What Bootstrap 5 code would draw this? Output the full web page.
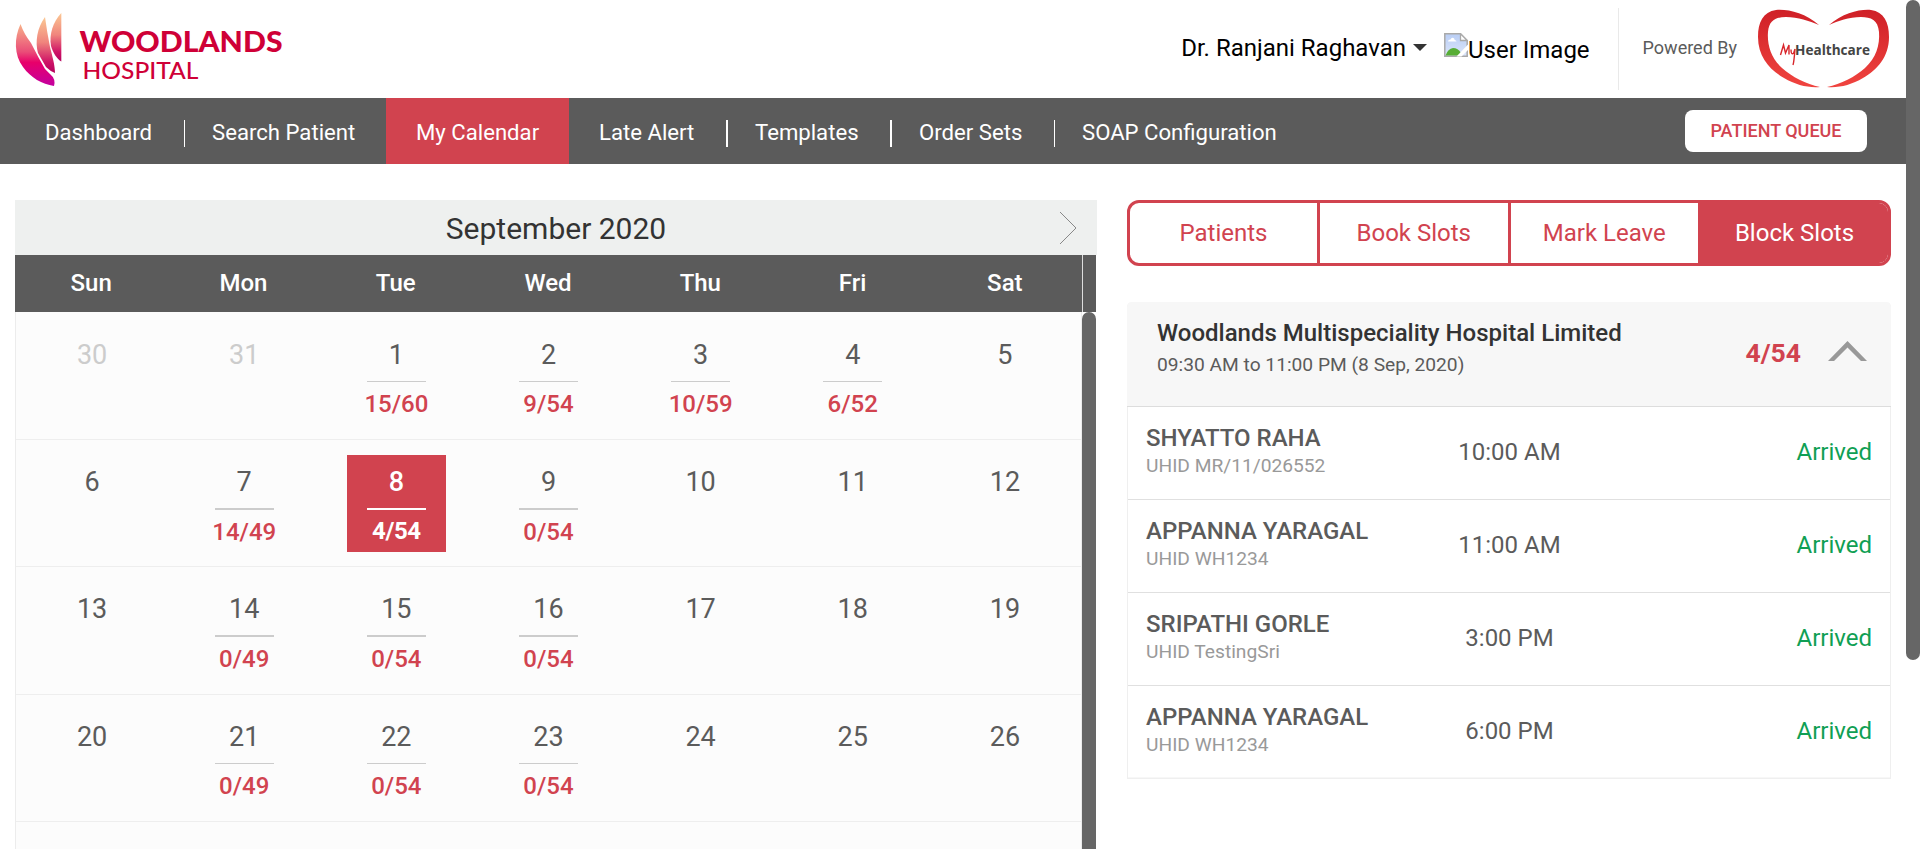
<!DOCTYPE html>
<html lang="en">
<head>
<meta charset="utf-8">
<meta name="viewport" content="width=device-width, initial-scale=1">
<title>My Calendar - Woodlands Hospital</title>
<link href="https://cdn.jsdelivr.net/npm/bootstrap@5.3.0/dist/css/bootstrap.min.css" rel="stylesheet">
<style>
:root{--brand:#d1434f;--bar:#5b5b5b}
html,body{height:100%;overflow:hidden}
body{font-family:Roboto,"Liberation Sans",sans-serif;color:#5b5b5b;background:#fff;font-size:24px;line-height:1.2}
.page{width:1906px;height:849px;overflow:hidden}
.rail{width:14px}
.rail .thumb{height:660px;background:#666;border-radius:7px}
.topbar{height:98px}
.doctor{color:#000;font-size:24px;padding-bottom:2px}
.caret{width:0;height:0;border:7px solid transparent;border-top-color:#333;border-bottom:0;margin:0 17px 4px 7px}
.broken{margin-top:-9px}
.avatar{color:#000;padding-top:3px}
.powered{border-left:1px solid #e9e9e9;height:82px;margin-top:8px;padding-left:24px;font-size:18px;margin-left:28px}
.powered span{margin-top:-2px}
.mainnav{height:66px;background:var(--bar);font-size:22.15px}
.mainnav .nav-link{color:#fff;padding:2px 0 0 30px;height:66px;display:flex;align-items:center;position:relative}
.mainnav .nav-link.active{background:var(--brand)}
.divided::after{content:"";position:absolute;right:0;top:22px;width:1.4px;height:27px;background:#fff}
.n1{width:185px;padding-left:45px!important}.n2{width:201px;padding-left:27px!important}.n3{width:183px}.n4{width:159px}.n5{width:164px;padding-left:27px!important}.n6{width:163px;padding-left:27px!important}.n7{width:240px;padding-left:27px!important}
.n4.divided::after,.n5.divided::after{width:2px}
.btn-queue{background:#fff;color:var(--brand);font-size:18px;font-weight:500;width:182px;height:42px;border-radius:8px;margin-right:39px;padding:0 0 2px}
.btn-queue:hover{background:#fff;color:var(--brand)}
.workspace{padding:36px 15px 0}
.calendar{width:1082px}
.cal-title{height:55px;background:#eef0ef;color:#333;font-size:30px;padding-top:2px}
.cal-title svg{right:20px;top:11px}
.week-head{height:57px;background:var(--bar);color:#fff;font-weight:500;width:1081px}
.week-head .days{width:1068px;border-right:1px solid #ddd;padding-right:1px}
.grid7{display:grid;grid-template-columns:repeat(7,1fr)}
.weeks{width:1081px;height:537px;overflow:hidden}
.weeks-in{width:1067px;background:#fcfcfc;border-left:1px solid #ececec;border-right:1px solid #ececec;padding-top:.7px}
.week{height:127.3px;border-bottom:1px solid #eee}
.cal-rail{width:14px;background:#666;border-radius:7px 7px 0 0}
.day{width:99px;height:97px;margin:15px auto 0;font-size:27px;text-align:center;line-height:32px;padding-top:11.2px}
.day hr{width:59px;height:1.36px;border:0;background:#ccc;opacity:1;margin:10px auto 7px}
.day b{display:block;font-size:24px;font-weight:500;color:var(--brand);line-height:30px}
.day.off{color:#ccc}
.day.sel{background:var(--brand);color:#fff;font-weight:500}
.day.sel hr{background:#fff;margin-bottom:6px}
.day.sel b{color:#fff;font-weight:700;letter-spacing:-.4px}
.side{width:764px;margin-left:30px}
.tabs4{height:66px;border:3px solid var(--brand);border-radius:12px;overflow:hidden}
.tabs4 .btn{border:0;border-radius:0;color:var(--brand);font-size:24px;padding:0;width:190.5px}
.tabs4 .btn:first-child{width:187px}
.tabs4 .btn+.btn{border-left:3px solid var(--brand)}
.tabs4 .btn.active{background:var(--brand);color:#fff;flex:1}
.slots{margin-top:36px;border:1px solid #efefef;border-top:0;border-radius:5px 5px 0 0}
.slots-head{height:105px;margin:0 -1px;background:#f7f7f7;border-bottom:1px solid #ddd;border-radius:5px 5px 0 0;padding:17px 24px 0 30px}
.slots-head h2{font-size:24px;font-weight:500;color:#333;margin:0;line-height:29px}
.slots-head p{font-size:19.2px;margin:5px 0 0;line-height:24px}
.ratio-text{color:var(--brand);font-weight:700;font-size:26.5px;padding-top:18px}
.fold{margin:22px 0 0 27px}
.visit{height:93px;border-bottom:1px solid #e0e0e0;padding:17px 18px 0 18px}
.visit:last-child{height:92px;border-bottom:1px solid #f7f7f7}
.visit .who{width:271px;line-height:29px}
.visit .who strong{display:block;font-weight:500;font-size:24px}
.visit .who span{display:block;font-size:19.2px;color:#999;line-height:24px;margin-top:1px}
.visit .when{width:185px;text-align:center;padding-top:14px}
.visit .state{color:#109f54;padding-top:14px}
</style>
</head>
<body class="d-flex">
<div class="page">
  <header class="topbar d-flex">
    <svg width="300" height="98" viewBox="0 0 300 98" role="img" aria-label="Woodlands Hospital">
      <defs>
        <linearGradient id="g1" x1="0" y1="0" x2="0" y2="1"><stop offset="0" stop-color="#f8b28a"/><stop offset=".45" stop-color="#ea4d78"/><stop offset=".62" stop-color="#e8006a"/><stop offset="1" stop-color="#c300a0"/></linearGradient>
        <linearGradient id="g2" x1="0" y1="0" x2="0" y2="1"><stop offset="0" stop-color="#fbc893"/><stop offset=".45" stop-color="#f0857d"/><stop offset=".8" stop-color="#cf1467"/><stop offset="1" stop-color="#b4005c"/></linearGradient>
      </defs>
      <path fill="url(#g2)" d="M61.300 13C53 22 49 34 51 46C53 53 57 59 61.300 61.500Z"/>
      <path fill="url(#g2)" d="M45 17C37 28 35 42 38 53L46 67Q50 71 55 73C55 65 52 55 50 47Q47 32 45 17Z"/>
      <path fill="url(#g1)" d="M20.500 24C14 38 14 55 23 67C31 78 42 84 54 86Q56 79 50 74L45 69Q38 57 31 43Q24 34 20.500 24Z"/>
      <text x="79.500" y="52" font-family="Lato" font-weight="900" font-size="29" fill="#cf0037" textLength="203" lengthAdjust="spacingAndGlyphs">WOODLANDS</text>
      <text x="82.500" y="79" font-family="Lato" font-weight="500" font-size="22.500" fill="#cf0037" textLength="116" lengthAdjust="spacingAndGlyphs">HOSPITAL</text>
    </svg>
    <div class="d-flex align-items-center ms-auto">
      <span class="doctor">Dr. Ranjani Raghavan</span><i class="caret"></i>
      <svg class="broken" width="24" height="24" viewBox="0 0 24 24"><defs><linearGradient id="sky" x1="0" y1="0" x2="0" y2="1"><stop offset="0" stop-color="#b9cef5"/><stop offset="1" stop-color="#dbe5fa"/></linearGradient></defs><path d="M.8.8H16.500L23.200 7.500V23.200H.8Z" fill="url(#sky)" stroke="#a9a9a9" stroke-width="1.500"/><path d="M16.500.8V7.500H23.200Z" fill="#fff" stroke="#a9a9a9" stroke-width="1.300"/><path d="M4 8.500q0-2 2.500-2 1-2.500 3-1.500 1.500 1 1 2 2 0 2 1.500z" fill="#fff"/><path d="M1.500 22.500Q4 15.500 9 15Q14 15 17 20L14 22.500Z" fill="#57ad35"/><path d="M24 11.500L12.500 23.500H17.500L24 17Z" fill="#fff"/></svg>
      <span class="avatar">User Image</span>
    </div>
    <div class="powered d-flex align-items-center"><span>Powered By</span></div>
    <svg width="169" height="98" viewBox="1737 0 169 98" role="img" aria-label="MyHealthcare">
      <defs><linearGradient id="h" x1="0" y1="0" x2="0" y2="1"><stop offset="0" stop-color="#cf2027"/><stop offset="1" stop-color="#f0443f"/></linearGradient></defs>
      <path fill="url(#h)" d="M1819 25C1805 13 1788 9 1776 10C1763 12 1758 22 1758 37C1758 57 1770 70 1784 78C1796 85 1808 88 1820 87C1806 84 1792 77 1782 68C1771 58 1767 45 1768 32C1769 20 1776 17 1786 17C1798 17 1809 21 1819 25Z"/>
      <path fill="url(#h)" d="M1829 25C1843 13 1860 9 1871 10C1884 12 1889 22 1889 37C1889 57 1877 70 1863 78C1851 85 1839 88 1827 87C1841 84 1855 77 1865 68C1876 58 1880 45 1879 32C1878 20 1871 17 1861 17C1849 17 1838 21 1829 25Z"/>
      <path d="M1780.500 55L1783.500 45L1785.500 53L1789 45L1789 54.500M1791 49.500Q1791 55 1793.500 53.500L1795 49M1795 49Q1794 62 1793 65" fill="none" stroke="#d8262c" stroke-width="1.400"/>
      <text x="1795" y="55" font-family="Open Sans" font-weight="700" font-size="14.500" fill="#444" textLength="75" lengthAdjust="spacingAndGlyphs">Healthcare</text>
    </svg>
  </header>

  <nav class="mainnav d-flex align-items-center">
    <a class="nav-link n1 divided">Dashboard</a>
    <a class="nav-link n2">Search Patient</a>
    <a class="nav-link n3 active">My Calendar</a>
    <a class="nav-link n4 divided">Late Alert</a>
    <a class="nav-link n5 divided">Templates</a>
    <a class="nav-link n6 divided">Order Sets</a>
    <a class="nav-link n7">SOAP Configuration</a>
    <button class="btn btn-queue ms-auto">PATIENT QUEUE</button>
  </nav>

  <main class="workspace d-flex align-items-start">
    <section class="calendar">
      <div class="cal-title position-relative d-flex align-items-center justify-content-center">September 2020
        <svg class="position-absolute" width="18" height="34" viewBox="0 0 18 34" fill="none" stroke="#888" stroke-width="1"><path d="M1 1L17 17L1 33"/></svg>
      </div>
      <div class="week-head d-flex">
        <div class="days grid7 align-items-center text-center"><span>Sun</span><span>Mon</span><span>Tue</span><span>Wed</span><span>Thu</span><span>Fri</span><span>Sat</span></div>
      </div>
      <div class="weeks d-flex">
        <div class="weeks-in">
          <div class="week grid7">
            <div class="day off">30</div><div class="day off">31</div><div class="day">1<hr><b>15/60</b></div><div class="day">2<hr><b>9/54</b></div><div class="day">3<hr><b>10/59</b></div><div class="day">4<hr><b>6/52</b></div><div class="day">5</div>
          </div>
          <div class="week grid7">
            <div class="day">6</div><div class="day">7<hr><b>14/49</b></div><div class="day sel">8<hr><b>4/54</b></div><div class="day">9<hr><b>0/54</b></div><div class="day">10</div><div class="day">11</div><div class="day">12</div>
          </div>
          <div class="week grid7">
            <div class="day">13</div><div class="day">14<hr><b>0/49</b></div><div class="day">15<hr><b>0/54</b></div><div class="day">16<hr><b>0/54</b></div><div class="day">17</div><div class="day">18</div><div class="day">19</div>
          </div>
          <div class="week grid7">
            <div class="day">20</div><div class="day">21<hr><b>0/49</b></div><div class="day">22<hr><b>0/54</b></div><div class="day">23<hr><b>0/54</b></div><div class="day">24</div><div class="day">25</div><div class="day">26</div>
          </div>
          <div class="week grid7"></div>
        </div>
        <div class="cal-rail"></div>
      </div>
    </section>

    <section class="side">
      <div class="tabs4 d-flex">
        <button class="btn">Patients</button><button class="btn">Book Slots</button><button class="btn">Mark Leave</button><button class="btn active">Block Slots</button>
      </div>
      <div class="slots">
        <div class="slots-head d-flex">
          <div class="flex-grow-1"><h2>Woodlands Multispeciality Hospital Limited</h2><p>09:30 AM to 11:00 PM (8 Sep, 2020)</p></div>
          <div class="ratio-text">4/54</div>
          <svg class="fold" width="39" height="20" viewBox="0 0 39 20"><path d="M0 20L19.500 0L39 20H33L19.500 6.500L6 20Z" fill="#999"/></svg>
        </div>
        <div class="visit d-flex"><div class="who"><strong>SHYATTO RAHA</strong><span>UHID MR/11/026552</span></div><div class="when">10:00 AM</div><div class="state ms-auto">Arrived</div></div>
        <div class="visit d-flex"><div class="who"><strong>APPANNA YARAGAL</strong><span>UHID WH1234</span></div><div class="when">11:00 AM</div><div class="state ms-auto">Arrived</div></div>
        <div class="visit d-flex"><div class="who"><strong>SRIPATHI GORLE</strong><span>UHID TestingSri</span></div><div class="when">3:00 PM</div><div class="state ms-auto">Arrived</div></div>
        <div class="visit d-flex"><div class="who"><strong>APPANNA YARAGAL</strong><span>UHID WH1234</span></div><div class="when">6:00 PM</div><div class="state ms-auto">Arrived</div></div>
      </div>
    </section>
  </main>
</div>
<div class="rail"><div class="thumb"></div></div>
<script src="https://cdn.jsdelivr.net/npm/bootstrap@5.3.0/dist/js/bootstrap.bundle.min.js"></script>
</body>
</html>
